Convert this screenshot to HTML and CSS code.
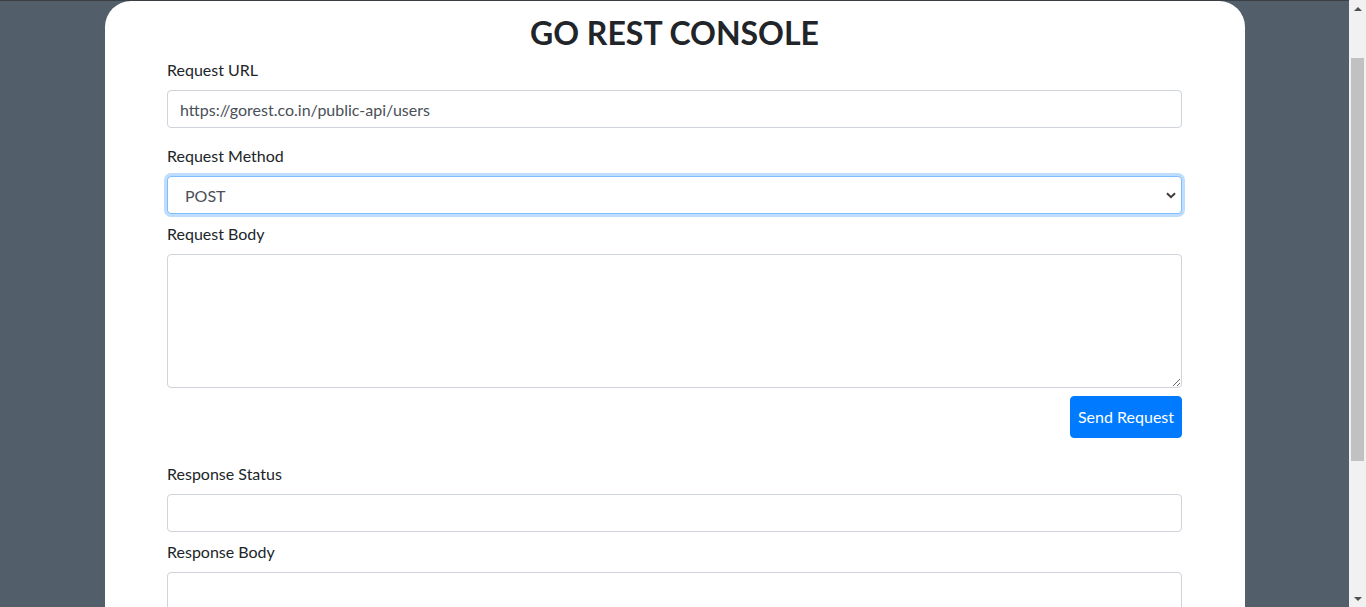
FILE: index.html
```html
<!DOCTYPE html>
<html lang="en">
<head>
<meta charset="utf-8">
<title>Go Rest Console</title>
<link rel="stylesheet" href="styles.css">
</head>
<body>
<div class="page">
  <div class="card">
    <h1 class="title">GO REST CONSOLE</h1>
    <div class="group">
      <label class="label" for="url">Request URL</label>
      <input class="control" id="url" type="text" value="https://gorest.co.in/public-api/users">
    </div>
    <div class="group group-method">
      <label class="label" for="method">Request Method</label>
      <div class="select-wrap">
        <select class="control select" id="method">
          <option>GET</option>
          <option selected>POST</option>
          <option>PUT</option>
          <option>DELETE</option>
        </select>
        <svg class="chevron" width="10" height="7" viewBox="0 0 10 7"><path d="M1 1.2 L5 5.2 L9 1.2" fill="none" stroke="#3c3c3c" stroke-width="2"/></svg>
      </div>
    </div>
    <div class="group group-tight">
      <label class="label" for="body">Request Body</label>
      <textarea class="control area" id="body" rows="5"></textarea>
    </div>
    <div class="actions">
      <button class="btn" type="button">Send Request</button>
    </div>
    <div class="group group-response">
      <label class="label" for="status">Response Status</label>
      <input class="control" id="status" type="text">
    </div>
    <div class="group group-tight">
      <label class="label" for="resp">Response Body</label>
      <textarea class="control area" id="resp" rows="5"></textarea>
    </div>
  </div>
</div>
<div class="scrollbar">
  <div class="sb-btn"><span class="tri-up"></span></div>
  <div class="sb-track"><div class="sb-thumb"></div></div>
  <div class="sb-btn"><span class="tri-down"></span></div>
</div>
</body>
</html>
```

FILE: styles.css
```css
html, body {
  margin: 0;
  padding: 0;
  height: 607px;
  overflow: hidden;
}
body {
  display: flex;
  font-family: Lato, "Open Sans", sans-serif;
  font-size: 16px;
  color: #212529;
}
.page {
  flex: 1;
  background: #525f6b;
  border-top: 1px solid #3a3f44;
  overflow: hidden;
}
.card {
  width: 1140px;
  box-sizing: border-box;
  margin: 0 auto;
  background: #fff;
  border-radius: 26px 26px 0 0;
  padding: 13px 62.5px 40px;
  min-height: 700px;
}
.title {
  margin: 0 0 6px;
  text-align: center;
  font-size: 32px;
  line-height: 38px;
  font-weight: 700;
  color: #212529;
}
.group {
  margin: 0;
}
.group-method {
  margin-top: 16px;
}
.group-tight {
  margin-top: 8px;
}
.group-response {
  margin-top: 24px;
}
.label {
  display: block;
  line-height: 24px;
  margin-bottom: 8px;
  color: #212529;
}
.control {
  display: block;
  width: 100%;
  box-sizing: border-box;
  height: 38px;
  padding: 6px 12px;
  font-family: inherit;
  font-size: 16px;
  line-height: 24px;
  color: #495057;
  background: #fff;
  border: 1px solid #ced4da;
  border-radius: 4px;
  outline: none;
}
.select-wrap {
  position: relative;
}
.select {
  -webkit-appearance: none;
  appearance: none;
  padding-left: 17px;
  padding-top: 7px;
  padding-bottom: 5px;
  border-color: #80bdff;
  box-shadow: 0 0 0 3px rgba(0, 123, 255, 0.25);
}
.chevron {
  position: absolute;
  right: 6px;
  top: 16px;
}
.area {
  height: 134px;
  resize: vertical;
}
.actions {
  display: flex;
  justify-content: flex-end;
  margin-top: 8px;
}
.btn {
  font-family: inherit;
  font-size: 16px;
  line-height: 24px;
  padding: 8px 7px;
  color: #fff;
  background: #007bff;
  border: 1px solid #007bff;
  border-radius: 4px;
}
.scrollbar {
  width: 17px;
  background: #f1f1f1;
  display: flex;
  flex-direction: column;
}
.sb-btn {
  height: 17px;
  display: flex;
  align-items: center;
  justify-content: center;
}
.sb-track {
  flex: 1;
}
.sb-thumb {
  margin: 41px 2px 0;
  height: 403px;
  background: #c1c1c1;
}
.tri-up {
  width: 0;
  height: 0;
  border-left: 4px solid transparent;
  border-right: 4px solid transparent;
  border-bottom: 4px solid #505050;
}
.tri-down {
  width: 0;
  height: 0;
  border-left: 4px solid transparent;
  border-right: 4px solid transparent;
  border-top: 4px solid #505050;
}
```
